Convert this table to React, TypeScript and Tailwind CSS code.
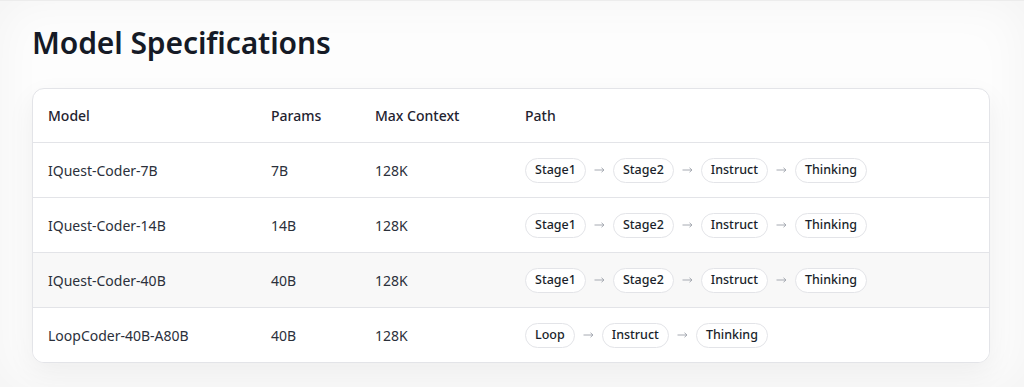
import React from "react";

const rows = [
  { model: "IQuest-Coder-7B", params: "7B", ctx: "128K", path: ["Stage1", "Stage2", "Instruct", "Thinking"] },
  { model: "IQuest-Coder-14B", params: "14B", ctx: "128K", path: ["Stage1", "Stage2", "Instruct", "Thinking"] },
  { model: "IQuest-Coder-40B", params: "40B", ctx: "128K", path: ["Stage1", "Stage2", "Instruct", "Thinking"], hl: true },
  { model: "LoopCoder-40B-A80B", params: "40B", ctx: "128K", path: ["Loop", "Instruct", "Thinking"] },
];

function Pill({ label }: { label: string }) {
  return (
    <span className="inline-flex items-center h-[25px] px-[9px] pt-[1px] rounded-full border border-[#e3e4e8] bg-white text-[12.5px] font-medium text-[#1a1f2b] leading-none">
      {label}
    </span>
  );
}

function Arrow() {
  return (
    <svg width="11" height="8" viewBox="0 0 11 8" fill="none" className="shrink-0">
      <path d="M0.5 4H10" stroke="#a6aab2" strokeWidth="1" />
      <path d="M7.5 1.8L10 4L7.5 6.2" stroke="#a6aab2" strokeWidth="1" strokeLinejoin="round" />
    </svg>
  );
}

export default function App() {
  return (
    <div
      className="w-[1024px] h-[387px] overflow-hidden bg-[#fdfdfd] pt-[22px] pl-[32px] pr-[34px] shadow-[inset_0_0_50px_rgba(0,0,0,0.045)] border-t border-[#ececec]"
      style={{ fontFamily: '"Noto Sans", "Open Sans", sans-serif' }}
    >
      <h1 className="text-[30px] leading-[40px] font-semibold text-[#151a26] tracking-[-0.1px]">Model Specifications</h1>
      <div className="mt-[25px] rounded-[12px] border border-[#e3e4e8] bg-white overflow-hidden shadow-[0_10px_28px_rgba(0,0,0,0.06)]">
        <div className="grid grid-cols-[222px_104px_150px_1fr] h-[53px] items-center text-[14px] font-medium text-[#1f2330]">
          <div className="pl-[15px] pr-4">Model</div>
          <div className="px-4">Params</div>
          <div className="px-4">Max Context</div>
          <div className="px-4">Path</div>
        </div>
        {rows.map((r) => (
          <div
            key={r.model}
            className={`grid grid-cols-[222px_104px_150px_1fr] h-[55px] items-center border-t border-[#e3e4e8] text-[14px] text-[#2b303b] ${r.hl ? "bg-[#f8f8f8]" : "bg-white"}`}
          >
            <div className="pl-[15px] pr-4">{r.model}</div>
            <div className="px-4">{r.params}</div>
            <div className="px-4">{r.ctx}</div>
            <div className="px-4 flex items-center gap-[8px]">
              {r.path.map((p, i) => (
                <React.Fragment key={p}>
                  {i > 0 && <Arrow />}
                  <Pill label={p} />
                </React.Fragment>
              ))}
            </div>
          </div>
        ))}
      </div>
    </div>
  );
}
